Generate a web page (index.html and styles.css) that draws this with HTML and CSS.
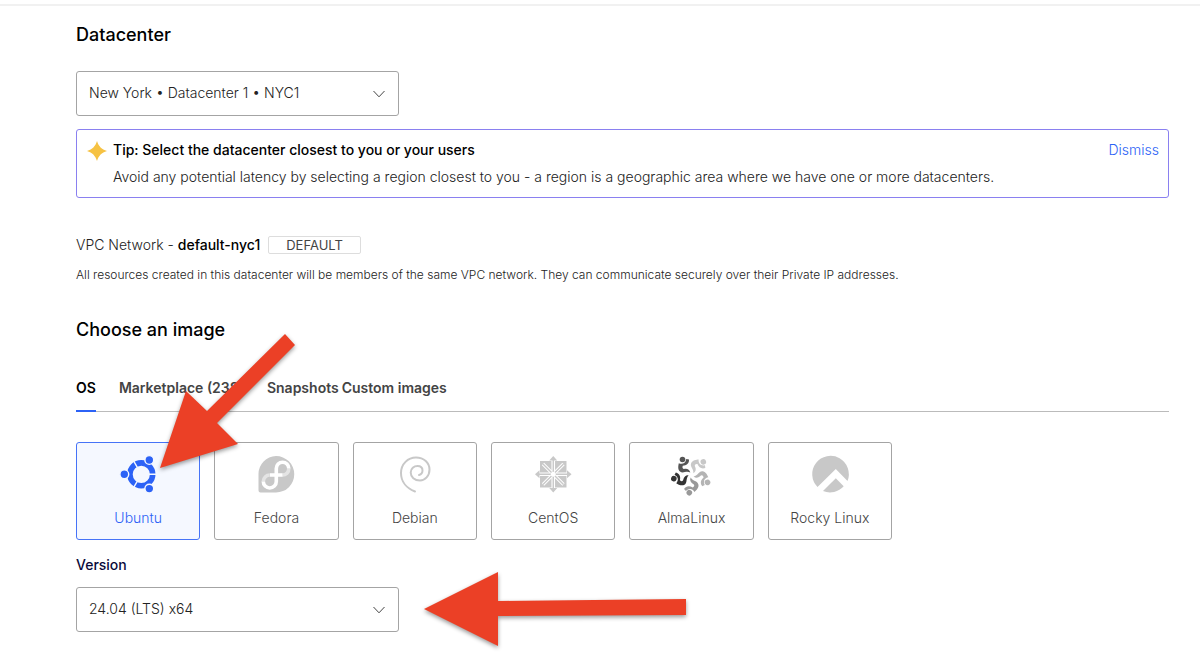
FILE: index.html
```
<!DOCTYPE html>
<html lang="en">
<head>
    <meta charset="UTF-8">
    <meta name="viewport" content="width=device-width, initial-scale=1.0">
    <title>Create Droplet</title>
    <link rel="stylesheet" href="styles.css">
</head>

<body>
    <div class="topbar"></div>
    <main class="container">
        <!-- Datacenter -->
        <section class="section">
            <h2><label for="datacenter">Datacenter</label></h2>
            <div class="select">
                <select id="datacenter">
                    <option>New York • Datacenter 1 • NYC1</option>
                </select>
                <svg class="chevron" viewBox="0 0 12 8"><path d="M.5 1l5.500 5.800L11.500 1"/></svg>
            </div>

            <div class="tip">
                <svg class="tip-icon" viewBox="0 0 20 20"><path d="M10 0C11.800 5.500 14.500 8.200 20 10 14.500 11.800 11.800 14.500 10 20 8.200 14.500 5.500 11.800 0 10 5.500 8.200 8.200 5.500 10 0z"/></svg>
                <div class="tip-text">
                    <h3>Tip: Select the datacenter closest to you or your users</h3>
                    <p>Avoid any potential latency by selecting a region closest to you - a region is a geographic area where we have one or more datacenters.</p>
                </div>
                <button class="dismiss" type="button">Dismiss</button>
            </div>

            <p class="vpc">VPC Network - <strong>default-nyc1</strong> <span class="tag">DEFAULT</span></p>
            <p class="note">All resources created in this datacenter will be members of the same VPC network. They can communicate securely over their Private IP addresses.</p>
        </section>

        <!-- Image -->
        <section class="section">
            <h2>Choose an image</h2>
            <div class="tabs">
                <button class="tab active" type="button">OS</button>
                <button class="tab" type="button">Marketplace (238)</button>
                <div class="tab-group">
                    <button class="tab" type="button">Snapshots</button>
                    <button class="tab" type="button">Custom images</button>
                </div>
            </div>

            <div class="images">
                <button class="image active" type="button">
                    <svg class="logo" viewBox="0 0 38 38">
                        <circle cx="22.300" cy="19.300" r="11.400" fill="none" stroke="currentColor" stroke-width="5.600"/>
                        <path stroke="#f5f8ff" stroke-width="1.400" d="M22.300 19.300H38M22.300 19.300l-8-13.900M22.300 19.300l-8 13.900"/>
                        <g fill="currentColor" stroke="#f5f8ff" stroke-width="1.400">
                            <circle cx="5.300" cy="19.300" r="4.400"/>
                            <circle cx="30.300" cy="5" r="4.400"/>
                            <circle cx="30.300" cy="33.600" r="4.400"/>
                        </g>
                    </svg>
                    <span>Ubuntu</span>
                </button>
                <button class="image" type="button">
                    <svg class="logo" viewBox="0 0 38 38">
                        <path fill="#c8c8c8" d="M19 1a18 18 0 1 1 0 36.500H3.500a2 2 0 0 1-2-2V19A18 18 0 0 1 19 1z"/>
                        <g fill="none" stroke-width="3.600">
                            <path stroke="#e4e4e4" d="M31.800 13.500a6.300 6.300 0 0 1-6.500 6.500M6.300 26.500a6.500 6.500 0 0 1 6.500-6.500"/>
                            <path stroke="#fff" d="M13 20h12.500M31.800 13.500a6.250 6.250 0 0 0-12.500 0v13a6.500 6.500 0 0 1-13 0"/>
                        </g>
                    </svg>
                    <span>Fedora</span>
                </button>
                <button class="image" type="button">
                    <svg class="logo" viewBox="0 0 38 38">
                        <path fill="none" stroke="#c8c8c8" stroke-width="2" stroke-linecap="round" d="M19 36.500C11 33.500 5 27 5 18 5 9 12 2.500 20 2.500c8 0 13.500 5.500 13.500 12 0 6.500-4.500 11-9.500 11-5.500 0-9.300-3.500-9.300-8 0-4 3.300-6.500 6.800-6.500 3.500 0 5 2 5 4.500S25 19.500 23 20"/>
                    </svg>
                    <span>Debian</span>
                </button>
                <button class="image" type="button">
                    <svg class="logo" viewBox="0 0 38 38">
                        <path fill="#c8c8c8" d="M6 6h26.500v26.500H6z"/>
                        <path stroke="#fff" stroke-width="3.600" d="M19.250 5v28.500M5 19.250h28.500"/>
                        <path stroke="#fff" stroke-width="3.200" d="M9 9l20.500 20.500M29.500 9L9 29.500"/>
                        <path stroke="#c8c8c8" stroke-width="1.400" d="M19.250 4v30.500M4 19.250h30.500M9 9l20.500 20.500M29.500 9L9 29.500"/>
                        <path fill="#c8c8c8" d="M19.250 1l4 4.500h-8zM19.250 37.500l4-4.500h-8zM1 19.250l4.500-4v8zM37.500 19.250l-4.500-4v8z"/>
                        <circle cx="19.250" cy="19.250" r="2.500" fill="#fff"/>
                    </svg>
                    <span>CentOS</span>
                </button>
                <button class="image" type="button">
                    <svg class="logo" viewBox="0 0 38 38">
                        <defs>
                            <g id="figure">
                                <circle cx="10.500" cy="4.500" r="2.800"/>
                                <path d="M18.300 17.500C14 15.500 11 19 8 16.500 5.500 14.500 6.300 10.500 6.800 8.200 10 9.800 13.500 8.500 14.300 4L17 4.500C17.200 8.500 14.500 10.500 10.800 10.800 9.800 13 11 14.300 13 13.800 15.500 13.500 17.800 14.800 18.300 17.500z"/>
                            </g>
                        </defs>
                        <use href="#figure" fill="#555"/>
                        <use href="#figure" fill="#c8c8c8" transform="rotate(72 19.300 20)"/>
                        <use href="#figure" fill="#b4b4b4" transform="rotate(144 19.300 20)"/>
                        <use href="#figure" fill="#999" transform="rotate(216 19.300 20)"/>
                        <use href="#figure" fill="#333" transform="rotate(288 19.300 20)"/>
                    </svg>
                    <span>AlmaLinux</span>
                </button>
                <button class="image" type="button">
                    <svg class="logo" viewBox="0 0 38 38">
                        <path fill="#c8c8c8" d="M6.500 32A18.300 18.300 0 1 1 36.500 26L24.800 14z"/>
                        <path fill="#c8c8c8" d="M12 36L24.800 23.200l7.900 8A18.300 18.300 0 0 1 12 36z"/>
                    </svg>
                    <span>Rocky Linux</span>
                </button>
            </div>

            <label class="version-label" for="version">Version</label>
            <div class="select">
                <select id="version">
                    <option>24.04 (LTS) x64</option>
                </select>
                <svg class="chevron" viewBox="0 0 12 8"><path d="M.5 1l5.500 5.800L11.500 1"/></svg>
            </div>
        </section>
    </main>

    <!-- Arrows pointing at the image and the version -->
    <svg class="arrow arrow-image" viewBox="0 0 138 136"><path d="M1 134L27 57 48 77 126 0 136 11 58 89 79 110z"/></svg>
    <svg class="arrow arrow-version" viewBox="0 0 263 76"><path d="M1 38L75 1v29l188-2v16l-188 1v30z"/></svg>
</body>
</html>
```
FILE: styles.css
```
* {
    box-sizing: border-box;
}

body {
    position: relative;
    margin: 0;
    background-color: #fff;
    color: #222;
    font-family: Inter, "Liberation Sans", sans-serif;
    font-size: 14px;
    font-weight: 300;
    line-height: 20px;
}

h2, h3, p {
    margin: 0;
}

button, select {
    font: inherit;
    cursor: pointer;
}

.topbar {
    height: 6px;
    border-bottom: 2px solid #f1f1f1;
}

.container {
    padding: 17px 31px 16px 76px;
}

.section {
    margin-bottom: 33px;
}

h2 {
    margin-bottom: 24px;
    color: #000;
    font-size: 18px;
    font-weight: 500;
    line-height: 24px;
}

.select {
    position: relative;
    width: 323px;
}

.select select {
    display: block;
    width: 100%;
    height: 45px;
    padding: 0 12px 2px;
    border: 1px solid #a4a4a4;
    border-radius: 3px;
    background-color: #fff;
    color: #222;
    appearance: none;
}

.chevron {
    position: absolute;
    top: 19px;
    right: 14px;
    width: 12px;
    height: 8px;
    fill: none;
    stroke: #444;
    pointer-events: none;
}

.tip {
    display: flex;
    align-items: flex-start;
    gap: 6px;
    margin: 13px 0 37px;
    padding: 10px 9px 10px 10px;
    border: 1px solid #8a80f0;
    border-radius: 3px;
}

.tip-icon {
    width: 20px;
    height: 22px;
    fill: #f6c243;
}

.tip-text {
    flex: 1;
}

.tip h3 {
    margin-bottom: 7px;
    color: #000;
    font-size: 14px;
    font-weight: 500;
}

.dismiss {
    padding: 0;
    border: 0;
    background: none;
    color: #2c62f6;
}

.vpc {
    display: flex;
    align-items: center;
    margin-bottom: 10px;
    white-space: pre;
}

.vpc strong {
    color: #000;
    font-weight: 500;
}

.tag {
    margin-left: 8px;
    padding: 0 17px;
    border: 1px solid #ddd;
    border-radius: 2px;
    color: #444;
    font-size: 13px;
    font-weight: 400;
    line-height: 16px;
}

.note {
    font-size: 12px;
}

.tabs {
    display: flex;
    gap: 23px;
    padding-top: 12px;
    border-bottom: 1px solid #bbb;
}

.tab-group {
    display: flex;
    gap: 3px;
}

.tab {
    margin-bottom: -1px;
    padding: 0 0 12px;
    border: 0;
    border-bottom: 2px solid transparent;
    background: none;
    color: #444;
    font-weight: 600;
}

.tab.active {
    border-color: #2c62f6;
    color: #000;
}

.images {
    display: grid;
    grid-template-columns: repeat(6, 1fr);
    gap: 14px;
    max-width: 816px;
    margin: 30px 0 15px;
}

.image {
    display: flex;
    flex-direction: column;
    align-items: center;
    gap: 15px;
    padding: 12px 0 11px;
    border: 1px solid #a4a4a4;
    border-radius: 3px;
    background-color: #fff;
    color: #444;
}

.image.active {
    border-color: #4673f7;
    background-color: #f5f8ff;
    color: #2c62f6;
}

.logo {
    width: 38px;
    height: 38px;
    overflow: visible;
}

.version-label {
    display: block;
    margin-bottom: 12px;
    color: #0a0a3a;
    font-weight: 500;
}

.arrow {
    position: absolute;
    fill: #eb4026;
    filter: drop-shadow(0 2px 2px rgba(0, 0, 0, 0.4));
}

.arrow-image {
    top: 334px;
    left: 159px;
    width: 138px;
}

.arrow-version {
    top: 571px;
    left: 423px;
    width: 263px;
}
```
